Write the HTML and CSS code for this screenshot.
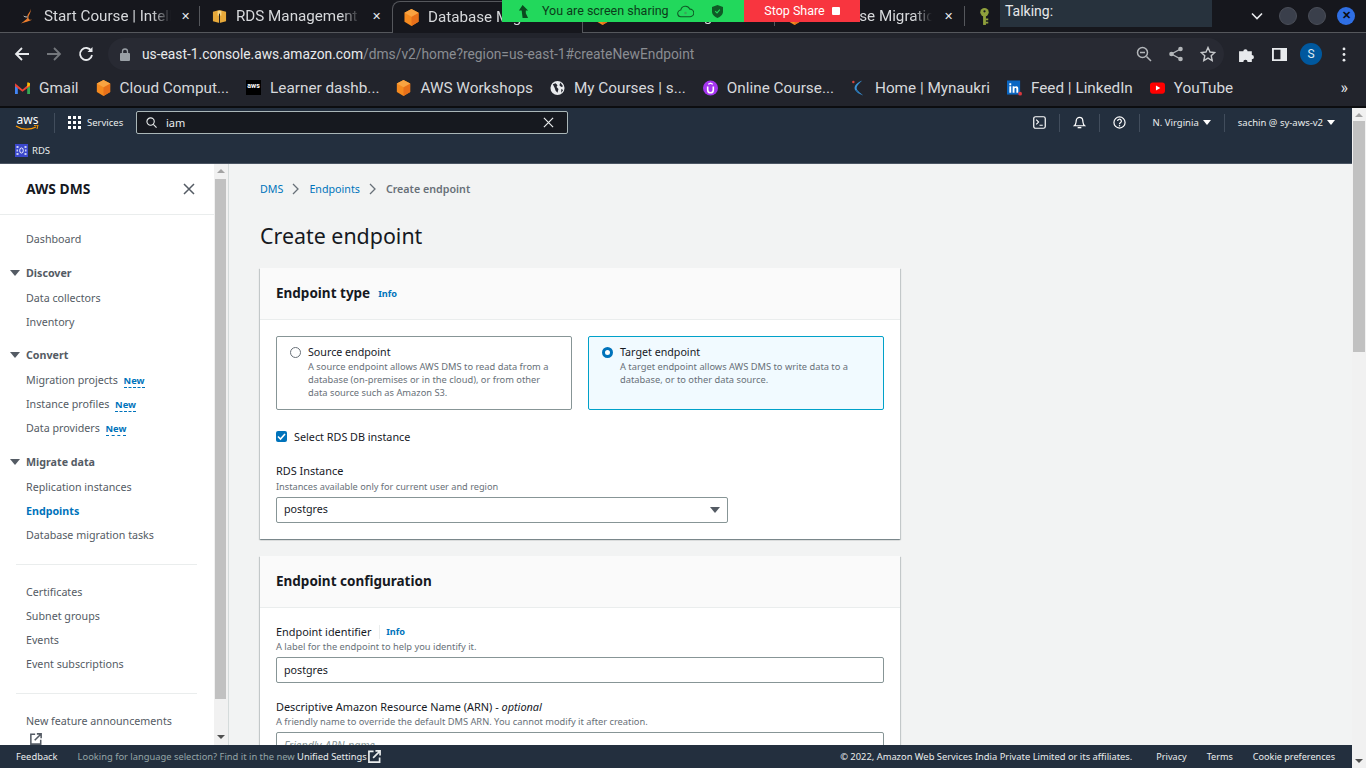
FILE: index.html
```html
<!DOCTYPE html>
<html lang="en">
<head>
    <meta charset="UTF-8">
    <meta name="viewport" content="width=device-width, initial-scale=1.0">
    <title>Database Migration Service</title>
    <link rel="stylesheet" href="styles.css">
</head>
<body>
    <svg class="defs" width="0" height="0">
        <symbol id="cube" viewBox="0 0 16 18">
            <path d="M8 0l7.5 4v9.500L8 18 .5 13.500V4z" fill="#f58a1f"/>
            <path d="M8 8.200L15.500 4v9.500L8 18z" fill="#e8701a"/>
            <path d="M8 0l7.500 4L8 8.200.5 4z" fill="#f9a341"/>
        </symbol>
        <symbol id="ext" viewBox="0 0 14 14">
            <path d="M6 1.500H1v11.500h11.500V8" fill="none" stroke="currentColor" stroke-width="1.800"/>
            <path d="M5.500 8.500L12 2M8 1h5v5" fill="none" stroke="currentColor" stroke-width="1.800"/>
        </symbol>
    </svg>

    <div class="browser">
        <div class="tabstrip">
            <div class="tab tab-first">
                <svg class="tab-icon" viewBox="0 0 16 17"><path d="M11 0c1 4-4 6-3 9 .5 1.500-3 4-7 7 5-2 8-2 12-4-3 0-4-.5-4-2.500C9 7 12.500 4 11 0z" fill="#ec7d2d"/><path d="M4 8c1 1 3 1 4 1" stroke="#f3efe8" fill="none"/></svg>
                <span class="tab-title">Start Course | Intell</span>
                <span class="tab-close">&#10005;</span>
            </div>
            <div class="tab tab-second">
                <svg class="tab-icon" viewBox="0 0 16 16"><path d="M1 3l7-2 7 2v10l-7 2-7-2z" fill="#e7a93a"/><path d="M6 2h4v5H6z" fill="#f7d583"/><path d="M8 5v10" stroke="#1b1c22"/></svg>
                <span class="tab-title">RDS Management (</span>
                <span class="tab-close">&#10005;</span>
            </div>
            <div class="tab tab-active">
                <svg class="tab-icon tab-cube"><use href="#cube"/></svg>
                <span class="tab-title">Database Migration</span>
            </div>
            <div class="tab tab-fourth">
                <svg class="tab-icon tab-cube"><use href="#cube"/></svg>
                <span class="tab-title">Database Migration</span>
            </div>
            <div class="tab tab-fifth">
                <svg class="tab-icon tab-cube"><use href="#cube"/></svg>
                <span class="tab-title">Database Migratio</span>
                <span class="tab-close">&#10005;</span>
            </div>
            <div class="tab tab-key">
                <svg class="tab-icon" viewBox="0 0 16 18"><circle cx="8" cy="4.500" r="4.500" fill="#8fa03c"/><path d="M6.500 8h3v10h-3z" fill="#8fa03c"/><path d="M9 11h3v2H9zM9 14.500h3v2H9z" fill="#8fa03c"/><circle cx="8" cy="3.500" r="1.200" fill="#1b1c22"/></svg>
            </div>
            <div class="win-controls">
                <svg class="win-chevron" viewBox="0 0 12 8"><path d="M1 1.500l5 5 5-5" fill="none" stroke="#e8eaed" stroke-width="1.600"/></svg>
                <span class="win-dot"></span>
                <span class="win-dot"></span>
                <span class="win-dot win-close">&#10005;</span>
            </div>
        </div>

        <div class="toolbar">
            <svg class="tool" viewBox="0 0 16 16"><path d="M15 8H2M8 2L2 8l6 6" fill="none" stroke="#e8eaed" stroke-width="1.800"/></svg>
            <svg class="tool" viewBox="0 0 16 16"><path d="M1 8h13M8 2l6 6-6 6" fill="none" stroke="#74777c" stroke-width="1.800"/></svg>
            <svg class="tool" viewBox="0 0 16 16"><path d="M13.300 5A6 6 0 1 0 14 9" fill="none" stroke="#e8eaed" stroke-width="1.800"/><path d="M14.500 1v5h-5z" fill="#e8eaed"/></svg>
            <div class="omnibox">
                <svg class="lock" viewBox="0 0 10 13"><path d="M2.500 5V3.500a2.500 2.500 0 0 1 5 0V5" fill="none" stroke="#9aa0a6" stroke-width="1.300"/><rect y="5" width="10" height="8" rx="1" fill="#9aa0a6"/></svg>
                <span class="url"><b>us-east-1.console.aws.amazon.com</b>/dms/v2/home?region=us-east-1#createNewEndpoint</span>
                <svg class="omni-icon" viewBox="0 0 16 16"><circle cx="6.500" cy="6.500" r="5" fill="none" stroke="#b3b6ba" stroke-width="1.500"/><path d="M10.500 10.500L15 15M4 6.500h5" stroke="#b3b6ba" stroke-width="1.500"/></svg>
                <svg class="omni-icon" viewBox="0 0 16 16"><path d="M12.500 3L3.500 8l9 5" fill="none" stroke="#b3b6ba" stroke-width="1.400"/><circle cx="12.500" cy="3" r="2.300" fill="#b3b6ba"/><circle cx="3.500" cy="8" r="2.300" fill="#b3b6ba"/><circle cx="12.500" cy="13" r="2.300" fill="#b3b6ba"/></svg>
                <svg class="omni-icon omni-last" viewBox="0 0 16 16"><path d="M8 1.500l2 4.500 4.800.5-3.600 3.200 1 4.800L8 12.100l-4.200 2.400 1-4.800L1.200 6.500 6 6z" fill="none" stroke="#c6c8cb" stroke-width="1.400"/></svg>
            </div>
            <svg class="ext-icon" viewBox="0 0 16 16"><path d="M1 5h4a2 2 0 1 1 4 0h4v3.500a2 2 0 1 1 0 4V15H9a2 2 0 1 0-4 0H1z" fill="#e8eaed"/></svg>
            <svg class="side-icon" viewBox="0 0 16 16"><path d="M1 2h14v12H1z" fill="none" stroke="#e8eaed" stroke-width="2"/><path d="M9 2h6v12H9z" fill="#e8eaed"/></svg>
            <span class="avatar">S</span>
            <svg class="dots" viewBox="0 0 4 16"><circle cx="2" cy="2" r="1.500" fill="#e8eaed"/><circle cx="2" cy="8" r="1.500" fill="#e8eaed"/><circle cx="2" cy="14" r="1.500" fill="#e8eaed"/></svg>
        </div>

        <div class="bookmarks">
            <div class="bm">
                <svg class="bm-icon" viewBox="0 0 16 13"><path d="M0 2.500V13h3V5.500z" fill="#4285f4"/><path d="M13 13h3V2.500L13 5.500z" fill="#34a853"/><path d="M0 1.500L8 8l8-6.500v3L8 10.500 0 4.500z" fill="#ea4335"/><path d="M13 .5h1.500L16 1.500v2l-3 2.200z" fill="#fbbc04"/></svg>
                <span>Gmail</span>
            </div>
            <div class="bm">
                <svg class="bm-icon"><use href="#cube"/></svg>
                <span>Cloud Comput...</span>
            </div>
            <div class="bm">
                <span class="bm-aws">aws</span>
                <span>Learner dashb...</span>
            </div>
            <div class="bm">
                <svg class="bm-icon"><use href="#cube"/></svg>
                <span>AWS Workshops</span>
            </div>
            <div class="bm">
                <svg class="bm-icon" viewBox="0 0 16 16"><circle cx="8" cy="8" r="7.500" fill="#e8eaed"/><path d="M3 4l3-1 2 2-1 2 2 2-1 4-2-2-1-3zM11 2l3 4-2 1-2-2zM12 9l2 1-2 3z" fill="#23252e"/></svg>
                <span>My Courses | s...</span>
            </div>
            <div class="bm">
                <svg class="bm-icon" viewBox="0 0 16 16"><circle cx="8" cy="8" r="8" fill="#a435f0"/><path d="M5 6.500v3.500a3 3 0 0 0 6 0V6.500" fill="none" stroke="#fff" stroke-width="1.700"/><path d="M5.500 4L8 2.800 10.500 4" fill="none" stroke="#fff" stroke-width="1.200"/></svg>
                <span>Online Course...</span>
            </div>
            <div class="bm">
                <svg class="bm-icon" viewBox="0 0 16 16"><path d="M12 0C5 3 2 7 5 11c1.500 2 5 4 8 5-3-3-7-5-7-8 0-3 4-6 6-8z" fill="#3b93d6"/><path d="M5 11c1.500 2 5 4 8 5-3-1-6-3-6.500-6z" fill="#1d5f96"/><circle cx="2.500" cy="1.500" r="1.300" fill="#d9453d"/></svg>
                <span>Home | Mynaukri</span>
            </div>
            <div class="bm">
                <svg class="bm-icon" viewBox="0 0 16 16"><path d="M0 0h14v15H0z" fill="#0a66c2"/><path d="M2.500 6h2v7h-2zM2.500 3h2v2h-2zM6 6h2v1c1-1.500 4-1.500 4 1.500V13h-2V9c0-1.500-2-1.500-2 0v4H6z" fill="#fff"/><circle cx="14" cy="14" r="2" fill="#d9383d"/></svg>
                <span>Feed | LinkedIn</span>
            </div>
            <div class="bm">
                <svg class="bm-icon" viewBox="0 0 16 12"><rect width="16" height="12" rx="3" fill="#f00"/><path d="M6.300 3.300L11 6l-4.700 2.700z" fill="#fff"/></svg>
                <span>YouTube</span>
            </div>
            <span class="bm-more">&raquo;</span>
        </div>
    </div>

    <div class="share-bar">
        <div class="share-green">
            <svg class="share-arrow" viewBox="0 0 12 14"><path d="M5 0l6 6H8.500v3l2.500 5H5L4 6H1z" fill="#0b4a1f"/></svg>
            <span class="share-text">You are screen sharing</span>
            <svg class="share-cloud" viewBox="0 0 18 13"><path d="M4.500 12a3.500 3.500 0 0 1-.5-7 5 5 0 0 1 9.500-1A4 4 0 0 1 14 12z" fill="none" stroke="#0f5a26" stroke-width="1.100"/><circle cx="9" cy="8" r="1.300" fill="#3ca35a"/></svg>
            <svg class="share-shield" viewBox="0 0 12 14"><path d="M6 0l6 2v5c0 3.500-3 6-6 7-3-1-6-3.500-6-7V2z" fill="#0f5a26"/><path d="M3.500 6.500L5.500 8.500 8.500 5" fill="none" stroke="#22d85c" stroke-width="1.200"/></svg>
        </div>
        <div class="share-red">
            <span>Stop Share</span>
            <span class="share-stop"></span>
        </div>
    </div>
    <div class="talking">Talking:</div>

    <div class="console">
        <div class="console-main">
            <header class="topnav">
                <div class="topnav-row">
                    <div class="aws-logo">
                        <span>aws</span>
                        <svg viewBox="0 0 24 6"><path d="M1 1c6 4 14 4 20 1" fill="none" stroke="#ff9900" stroke-width="1.300"/><path d="M19 .5l4-.5-1 4" fill="none" stroke="#ff9900" stroke-width="1"/></svg>
                    </div>
                    <div class="services">
                        <span class="grid-icon"><i></i><i></i><i></i><i></i><i></i><i></i><i></i><i></i><i></i></span>
                        <span>Services</span>
                    </div>
                    <div class="search">
                        <svg class="search-glass" viewBox="0 0 12 12"><circle cx="5" cy="5" r="4" fill="none" stroke="#eaeded" stroke-width="1.200"/><path d="M8 8l3.500 3.500" stroke="#eaeded" stroke-width="1.200"/></svg>
                        <span class="search-text">iam</span>
                        <svg class="search-x" viewBox="0 0 12 12"><path d="M1 1l10 10M11 1L1 11" stroke="#eaeded" stroke-width="1.300"/></svg>
                    </div>
                    <div class="nav-right">
                        <div class="nav-cell">
                            <svg class="nav-icon" viewBox="0 0 14 14"><rect x=".8" y=".8" width="12.400" height="12.400" rx="2" fill="none" stroke="#fff" stroke-width="1.300"/><path d="M3.500 4l2.500 2.500L3.500 9M7 10h3.500" fill="none" stroke="#fff" stroke-width="1.200"/></svg>
                        </div>
                        <div class="nav-cell">
                            <svg class="nav-icon" viewBox="0 0 14 14"><path d="M1.500 10.500C3.500 9 3 7.500 3.500 5a3.500 3.500 0 0 1 7 0c.5 2.500 0 4 2 5.500z" fill="none" stroke="#fff" stroke-width="1.300"/><path d="M5 12.500h4" stroke="#fff" stroke-width="1.500"/></svg>
                        </div>
                        <div class="nav-cell">
                            <svg class="nav-icon" viewBox="0 0 14 14"><circle cx="7" cy="7" r="6" fill="none" stroke="#fff" stroke-width="1.300"/><path d="M5 5.500a2 2 0 1 1 3 1.700c-.7.400-1 .8-1 1.600" fill="none" stroke="#fff" stroke-width="1.300"/><path d="M6.300 9.800h1.400v1.400H6.300z" fill="#fff"/></svg>
                        </div>
                        <div class="nav-cell nav-menu">N. Virginia <i class="caret"></i></div>
                        <div class="nav-cell nav-menu nav-user">sachin @ sy-aws-v2 <i class="caret"></i></div>
                    </div>
                </div>
                <div class="favorites">
                    <svg class="rds-icon" viewBox="0 0 13 13"><rect width="13" height="13" fill="#3b48cc"/><path d="M1.500 2h2v2h-2zM9.500 2h2v2h-2zM1.500 9h2v2h-2zM9.500 9h2v2h-2zM1.500 5.500h1.500v2H1.500zM10 5.500h1.500v2H10z" fill="#c9cff2"/><ellipse cx="6.500" cy="6.500" rx="1.800" ry="2.600" fill="none" stroke="#fff" stroke-width=".9"/></svg>
                    <span>RDS</span>
                </div>
            </header>

            <div class="workspace">
                <aside class="sidenav">
                    <div class="sidenav-head">
                        <span>AWS DMS</span>
                        <svg class="sidenav-close" viewBox="0 0 12 12"><path d="M1 1l10 10M11 1L1 11" stroke="#545b64" stroke-width="1.500"/></svg>
                    </div>
                    <div class="nav-link nav-dash">Dashboard</div>
                    <div class="nav-group"><i class="tri"></i>Discover</div>
                    <div class="nav-link">Data collectors</div>
                    <div class="nav-link">Inventory</div>
                    <div class="nav-group"><i class="tri"></i>Convert</div>
                    <div class="nav-link">Migration projects <span class="new">New</span></div>
                    <div class="nav-link">Instance profiles <span class="new">New</span></div>
                    <div class="nav-link">Data providers <span class="new">New</span></div>
                    <div class="nav-group"><i class="tri"></i>Migrate data</div>
                    <div class="nav-link">Replication instances</div>
                    <div class="nav-link nav-active">Endpoints</div>
                    <div class="nav-link">Database migration tasks</div>
                    <div class="nav-divider"></div>
                    <div class="nav-link">Certificates</div>
                    <div class="nav-link">Subnet groups</div>
                    <div class="nav-link">Events</div>
                    <div class="nav-link">Event subscriptions</div>
                    <div class="nav-divider"></div>
                    <div class="nav-link">New feature announcements</div>
                    <svg class="nav-ext"><use href="#ext"/></svg>
                </aside>
                <div class="scrollbar scrollbar-side">
                    <i class="sb-up"></i>
                    <div class="sb-thumb"></div>
                    <i class="sb-down"></i>
                </div>

                <main class="content">
                    <div class="breadcrumb">
                        <a>DMS</a>
                        <svg class="crumb-sep" viewBox="0 0 8 12"><path d="M1 1l5 5-5 5" fill="none" stroke="#687078" stroke-width="1.300"/></svg>
                        <a>Endpoints</a>
                        <svg class="crumb-sep" viewBox="0 0 8 12"><path d="M1 1l5 5-5 5" fill="none" stroke="#687078" stroke-width="1.300"/></svg>
                        <span class="crumb-current">Create endpoint</span>
                    </div>
                    <h1>Create endpoint</h1>

                    <section class="card">
                        <div class="card-head">
                            <h2>Endpoint type</h2>
                            <a class="info">Info</a>
                        </div>
                        <div class="card-body">
                            <div class="tiles">
                                <div class="tile">
                                    <span class="radio"></span>
                                    <div>
                                        <div class="tile-title">Source endpoint</div>
                                        <div class="tile-desc">A source endpoint allows AWS DMS to read data from a database (on-premises or in the cloud), or from other data source such as Amazon S3.</div>
                                    </div>
                                </div>
                                <div class="tile tile-on">
                                    <span class="radio radio-on"></span>
                                    <div>
                                        <div class="tile-title">Target endpoint</div>
                                        <div class="tile-desc">A target endpoint allows AWS DMS to write data to a database, or to other data source.</div>
                                    </div>
                                </div>
                            </div>
                            <div class="check-row">
                                <span class="checkbox"><svg viewBox="0 0 11 11"><path d="M2 5.500l2.500 2.500L9 3" fill="none" stroke="#fff" stroke-width="1.600"/></svg></span>
                                <span>Select RDS DB instance</span>
                            </div>
                            <div class="field field-rds">
                                <div class="field-label">RDS Instance</div>
                                <div class="field-desc">Instances available only for current user and region</div>
                                <div class="select">
                                    <span>postgres</span>
                                    <i class="tri tri-select"></i>
                                </div>
                            </div>
                        </div>
                    </section>

                    <section class="card">
                        <div class="card-head">
                            <h2>Endpoint configuration</h2>
                        </div>
                        <div class="card-body">
                            <div class="field">
                                <div class="field-label">Endpoint identifier <a class="info info-split">Info</a></div>
                                <div class="field-desc">A label for the endpoint to help you identify it.</div>
                                <div class="input">postgres</div>
                            </div>
                            <div class="field field-arn">
                                <div class="field-label">Descriptive Amazon Resource Name (ARN) - <em>optional</em></div>
                                <div class="field-desc">A friendly name to override the default DMS ARN. You cannot modify it after creation.</div>
                                <div class="input input-empty">Friendly-ARN-name</div>
                            </div>
                        </div>
                    </section>
                </main>
            </div>

            <footer class="footer">
                <span class="foot-feedback">Feedback</span>
                <span class="foot-lang">Looking for language selection? Find it in the new <b>Unified Settings</b></span>
                <svg class="foot-ext"><use href="#ext"/></svg>
                <div class="foot-right">
                    <span class="foot-copy">&copy; 2022, Amazon Web Services India Private Limited or its affiliates.</span>
                    <span>Privacy</span>
                    <span>Terms</span>
                    <span>Cookie preferences</span>
                </div>
            </footer>
        </div>
        <div class="scrollbar scrollbar-page">
            <i class="sb-up"></i>
            <div class="sb-thumb"></div>
            <i class="sb-down"></i>
        </div>
    </div>
</body>
</html>
```

FILE: styles.css
```css
:root {
    --nav-bg: #232f3e;
    --text: #16191f;
    --muted: #687078;
    --side-text: #545b64;
    --link: #0073bb;
    --border: #eaeded;
}
* {
    box-sizing: border-box;
}
html, body {
    margin: 0;
    height: 100%;
}
body {
    position: relative;
    display: flex;
    flex-direction: column;
    width: 1366px;
    height: 768px;
    overflow: hidden;
    font-family: "Noto Sans", sans-serif;
    font-size: 10.7px;
    color: var(--text);
}
.defs {
    position: absolute;
}
i {
    display: block;
}

/* browser frame */
.browser {
    flex: none;
    height: 108px;
    background: #22242c;
    border-bottom: 2px solid #0c0d10;
    font-family: Roboto, sans-serif;
    color: #e8eaed;
}
.tabstrip {
    display: flex;
    align-items: stretch;
    height: 33px;
    background: #16171d;
    border-bottom: 1px solid #55575c;
}
.tab {
    display: flex;
    align-items: center;
    flex: none;
    padding-left: 12px;
    font-size: 15.2px;
}
.tab-first {
    width: 200px;
    padding-left: 20px;
    border-right: 1px solid #55575c;
    margin: 6px 0;
}
.tab-first .tab-close {
    width: 28px;
}
.tab-second {
    width: 192px;
    margin: 6px 0;
}
.tab-active {
    width: 191px;
    margin-top: 1px;
    margin-bottom: -1px;
    padding-left: 11px;
    padding-bottom: 1px;
    background: #16171d;
    border: 1px solid #55575c;
    border-bottom: none;
    border-radius: 8px 8px 0 0;
}
.tab-fourth {
    width: 192px;
    border-right: 1px solid #55575c;
    margin: 6px 0;
}
.tab-fifth {
    width: 190px;
    border-right: 1px solid #55575c;
    margin: 6px 0;
}
.tab-key {
    width: 60px;
}
.tab-icon {
    flex: none;
    width: 15px;
    height: 17px;
    margin-right: 9px;
}
.tab-title {
    flex: 1;
    min-width: 0;
    white-space: nowrap;
    color: #d7d9dc;
    -webkit-mask-image: linear-gradient(90deg, #000 85%, transparent);
    mask-image: linear-gradient(90deg, #000 85%, transparent);
}
.tab-close {
    flex: none;
    width: 32px;
    text-align: center;
    font-size: 11px;
    color: #e8eaed;
}
.win-controls {
    display: flex;
    align-items: center;
    margin-left: auto;
    padding-right: 11px;
    gap: 11px;
}
.win-chevron {
    width: 12px;
    height: 8px;
    margin-right: 5px;
}
.win-dot {
    width: 18px;
    height: 18px;
    border-radius: 50%;
    background: #3a3f4b;
    border: 1px solid #4a4e58;
}
.win-close {
    background: #2f6fe4;
    border: none;
    color: #0c0d10;
    font-size: 11px;
    font-weight: 700;
    line-height: 18px;
    text-align: center;
}
.toolbar {
    display: flex;
    align-items: center;
    height: 38px;
    padding: 4px 0 0 14px;
}
.tool {
    flex: none;
    width: 16px;
    height: 16px;
    margin-right: 16px;
}
.omnibox {
    flex: none;
    display: flex;
    align-items: center;
    width: 1116px;
    height: 32px;
    margin-left: -2px;
    padding-left: 12px;
    border-radius: 16px;
    background: #282a33;
    font-size: 13.8px;
}
.lock {
    flex: none;
    width: 10px;
    height: 13px;
    margin-right: 12px;
}
.url {
    flex: 1;
    white-space: nowrap;
    color: #8a8d92;
}
.url b {
    font-weight: 400;
    color: #e8eaed;
}
.omni-icon {
    flex: none;
    width: 16px;
    height: 16px;
    margin-right: 16px;
}
.omni-last {
    margin-right: 8px;
}
.ext-icon {
    flex: none;
    width: 17px;
    height: 17px;
    margin-left: 14px;
}
.side-icon {
    flex: none;
    width: 15px;
    height: 15px;
    margin-left: 17px;
}
.avatar {
    flex: none;
    width: 22px;
    height: 22px;
    margin-left: 13px;
    border-radius: 50%;
    background: #00589e;
    color: #dfe9f2;
    font-size: 12px;
    line-height: 22px;
    text-align: center;
}
.dots {
    flex: none;
    width: 4px;
    height: 15px;
    margin-left: 20px;
}
.bookmarks {
    display: flex;
    align-items: center;
    gap: 17px;
    height: 35px;
    padding: 0 0 2px 15px;
    font-size: 15.3px;
    white-space: nowrap;
}
.bm {
    display: flex;
    align-items: center;
    gap: 9px;
    color: #d7d9dc;
}
.bm-icon {
    flex: none;
    width: 15px;
    height: 16px;
}
.bm-aws {
    flex: none;
    width: 15px;
    height: 15px;
    background: #000;
    color: #fff;
    font-size: 7px;
    font-weight: 700;
    line-height: 13px;
    text-align: center;
}
.bm-more {
    margin-left: auto;
    padding-right: 18px;
    font-size: 16px;
}

/* zoom overlays */
.share-bar {
    position: absolute;
    top: 0;
    left: 502px;
    display: flex;
    width: 358px;
    height: 22px;
    font-family: Roboto, sans-serif;
    font-size: 12.5px;
    line-height: 22px;
}
.share-green {
    display: flex;
    align-items: center;
    width: 242px;
    background: #22d85c;
    color: #0b3d1a;
}
.share-arrow {
    width: 11px;
    height: 13px;
    margin: 0 13px 0 16px;
}
.share-cloud {
    width: 17px;
    height: 13px;
    margin-left: 8px;
}
.share-shield {
    width: 11px;
    height: 13px;
    margin-left: 18px;
}
.share-red {
    display: flex;
    align-items: center;
    justify-content: center;
    gap: 7px;
    width: 116px;
    background: #f8353f;
    color: #fff;
}
.share-stop {
    width: 8px;
    height: 8px;
    border-radius: 1px;
    background: #fff;
}
.talking {
    position: absolute;
    top: 0;
    left: 1000px;
    width: 212px;
    height: 27px;
    padding: 3px 5px;
    background: #27323d;
    color: #e6e8ea;
    font-family: Roboto, sans-serif;
    font-size: 14px;
}

/* aws console */
.console {
    flex: 1;
    min-height: 0;
    display: flex;
}
.console-main {
    flex: 1;
    min-width: 0;
    display: flex;
    flex-direction: column;
}
.topnav {
    flex: none;
    height: 56px;
    background: var(--nav-bg);
    border-bottom: 1px solid #4a5462;
    color: #eaeded;
}
.topnav-row {
    display: flex;
    align-items: center;
    height: 29px;
    padding-left: 15px;
}
.aws-logo {
    flex: none;
    width: 25px;
    margin-right: 15px;
    color: #fff;
    font-size: 12px;
    line-height: 10px;
    text-align: center;
}
.aws-logo svg {
    display: block;
    width: 24px;
    height: 6px;
}
.services {
    display: flex;
    align-items: center;
    gap: 6px;
    width: 81px;
    height: 20px;
    margin-left: -1px;
    padding-left: 13px;
    border-left: 1px solid #414d5c;
    font-size: 9.5px;
}
.grid-icon {
    display: grid;
    grid-template-columns: repeat(3, 3px);
    gap: 2px;
}
.grid-icon i {
    width: 3px;
    height: 3px;
    background: #fff;
}
.search {
    display: flex;
    align-items: center;
    width: 432px;
    height: 23px;
    margin-left: 1px;
    background: #16191f;
    border: 1px solid #aab7b8;
    border-radius: 2px;
    padding: 0 13px 0 9px;
}
.search-glass {
    width: 11px;
    height: 11px;
    margin-right: 9px;
}
.search-text {
    flex: 1;
    font-size: 11px;
}
.search-x {
    width: 11px;
    height: 11px;
}
.nav-right {
    display: flex;
    align-items: center;
    margin-left: auto;
    height: 20px;
}
.nav-cell {
    display: flex;
    align-items: center;
    height: 18px;
    padding: 0 13px;
    border-left: 1px solid #414d5c;
}
.nav-cell:first-child {
    border-left: none;
}
.nav-icon {
    width: 13px;
    height: 13px;
}
.nav-menu {
    gap: 4px;
    font-size: 9.5px;
    white-space: nowrap;
}
.nav-user {
    padding-right: 17px;
}
.caret {
    width: 0;
    height: 0;
    border-left: 4px solid transparent;
    border-right: 4px solid transparent;
    border-top: 5px solid #fff;
}
.favorites {
    display: flex;
    align-items: center;
    gap: 4px;
    height: 26px;
    padding-left: 15px;
    font-size: 9.5px;
}
.rds-icon {
    width: 13px;
    height: 13px;
}
.workspace {
    flex: 1;
    min-height: 0;
    display: flex;
    background: #f2f3f3;
    overflow: hidden;
}

/* side navigation */
.sidenav {
    flex: none;
    width: 214px;
    background: #fff;
    color: var(--side-text);
    font-size: 10.7px;
    overflow: hidden;
}
.sidenav-head {
    display: flex;
    align-items: center;
    justify-content: space-between;
    height: 51px;
    padding: 0 19px 1px 26px;
    border-bottom: 1px solid var(--border);
    color: var(--text);
    font-size: 13.8px;
    font-weight: 700;
}
.sidenav-close {
    width: 12px;
    height: 12px;
}
.nav-link {
    height: 24px;
    padding-left: 26px;
    line-height: 24px;
    white-space: nowrap;
}
.nav-dash {
    margin-top: 12px;
}
.nav-group {
    display: flex;
    align-items: center;
    height: 24px;
    margin-top: 9.5px;
    padding-left: 10px;
    font-weight: 700;
}
.nav-group + .nav-link {
    margin-top: 1px;
}
.tri {
    width: 0;
    height: 0;
    margin-right: 6px;
    border-left: 5px solid transparent;
    border-right: 5px solid transparent;
    border-top: 6px solid var(--side-text);
}
.new {
    display: inline-block;
    margin-left: 3px;
    border-bottom: 1px dashed var(--link);
    color: var(--link);
    font-size: 9.3px;
    font-weight: 700;
    line-height: 12px;
}
.nav-active {
    color: var(--link);
    font-weight: 700;
}
.nav-divider {
    height: 1px;
    margin: 17px 17px 15px 16px;
    background: var(--border);
}
.nav-ext {
    display: block;
    width: 12px;
    height: 12px;
    margin: 0 0 0 30px;
    color: var(--side-text);
}
.scrollbar {
    position: relative;
    flex: none;
    width: 14px;
    background: #f1f1f1;
}
.scrollbar-side {
    width: 15px;
    border-right: 1px solid #d5dbdb;
}
.sb-thumb {
    position: absolute;
    left: 1px;
    width: 12px;
    background: #c1c1c1;
}
.scrollbar-side .sb-thumb {
    top: 15px;
    left: 1px;
    width: 11px;
    height: 520px;
}
.scrollbar-page .sb-thumb {
    top: 13px;
    height: 231px;
}
.sb-up, .sb-down {
    position: absolute;
    left: 3px;
    width: 0;
    height: 0;
    border-left: 4px solid transparent;
    border-right: 4px solid transparent;
}
.sb-up {
    top: 5px;
    border-bottom: 4px solid #a3a3a3;
}
.sb-down {
    bottom: 5px;
    border-top: 4px solid #505050;
}
.scrollbar-side .sb-down {
    bottom: 6px;
}

/* page content */
.content {
    flex: 1;
    min-width: 0;
    padding: 0 0 0 31px;
    overflow: hidden;
}
.breadcrumb {
    display: flex;
    align-items: center;
    gap: 9px;
    height: 50px;
}
.breadcrumb a {
    color: var(--link);
}
.crumb-sep {
    width: 8px;
    height: 12px;
}
.crumb-current {
    color: var(--muted);
    font-weight: 600;
}
h1 {
    margin: 7px 0 18px;
    font-size: 21.4px;
    font-weight: 400;
    line-height: 29px;
    color: var(--text);
}
.card {
    width: 640px;
    margin-bottom: 17px;
    background: #fff;
    box-shadow: 0 1px 1px 0 rgba(0, 28, 36, 0.3), 1px 1px 1px 0 rgba(0, 28, 36, 0.15), -1px 1px 1px 0 rgba(0, 28, 36, 0.15);
}
.card-head {
    display: flex;
    align-items: center;
    gap: 8px;
    height: 52px;
    padding: 0 16px 1px;
    background: #fafafa;
    border-bottom: 1px solid var(--border);
}
h2 {
    margin: 0;
    font-size: 13.5px;
    font-weight: 700;
}
.info {
    color: var(--link);
    font-size: 9.2px;
    font-weight: 700;
}
.card-body {
    padding: 16px;
}
.tiles {
    display: flex;
    gap: 16px;
}
.tile {
    display: flex;
    gap: 7px;
    flex: none;
    width: 296px;
    height: 74px;
    padding: 8px 13px;
    border: 1px solid #879596;
    border-radius: 2px;
    line-height: 14px;
}
.tile-on {
    background: #f1faff;
    border-color: #00a1c9;
}
.tile-title {
    font-size: 10.7px;
}
.tile-desc {
    margin-top: 1px;
    color: var(--muted);
    font-size: 9.3px;
    line-height: 13px;
}
.radio {
    flex: none;
    width: 11px;
    height: 11px;
    margin-top: 2px;
    border: 1px solid #687078;
    border-radius: 50%;
    background: #fff;
}
.radio-on {
    border: 3px solid #0073bb;
}
.check-row {
    display: flex;
    align-items: center;
    gap: 7px;
    margin-top: 19px;
    font-size: 10.8px;
    line-height: 15px;
}
.checkbox {
    flex: none;
    width: 11px;
    height: 11px;
    border-radius: 2px;
    background: #0073bb;
}
.checkbox svg {
    display: block;
}
.field-rds {
    margin-top: 19px;
}
.field-rds .field-desc {
    margin-top: 2px;
    font-size: 9.2px;
}
.field-arn {
    margin-top: 16px;
}
.field-label {
    display: flex;
    align-items: center;
    height: 15px;
    font-size: 10.9px;
    white-space: pre;
}
.field-label em {
    font-style: italic;
}
.info-split {
    margin-left: 5px;
    padding-left: 6px;
    border-left: 1px solid var(--border);
    line-height: 14px;
}
.field-desc {
    margin: 1px 0 4px;
    color: var(--muted);
    font-size: 9.3px;
    line-height: 13px;
}
.select, .input {
    display: flex;
    align-items: center;
    height: 26px;
    padding: 0 7px 1px;
    border: 1px solid #879596;
    border-radius: 2px;
    background: #fff;
    font-size: 10.7px;
}
.select {
    justify-content: space-between;
    width: 452px;
    padding-bottom: 2px;
}
.tri-select {
    margin-right: 0;
    margin-top: 1px;
}
.input-empty {
    color: #879596;
    font-style: italic;
}

/* console footer */
.footer {
    flex: none;
    display: flex;
    align-items: center;
    height: 23px;
    padding: 0 17px 0 16px;
    background: var(--nav-bg);
    color: #eaeded;
    font-size: 9.35px;
    white-space: nowrap;
}
.foot-feedback {
    margin-right: 20px;
}
.foot-lang {
    color: #95a5a6;
}
.foot-lang b {
    font-weight: 400;
    color: #eaeded;
}
.foot-ext {
    width: 13px;
    height: 13px;
    margin-left: 1px;
    color: #eaeded;
}
.foot-right {
    display: flex;
    gap: 20px;
    margin-left: auto;
    font-size: 9.1px;
}
.foot-copy {
    margin-right: 4px;
    font-size: 9.35px;
}
```
